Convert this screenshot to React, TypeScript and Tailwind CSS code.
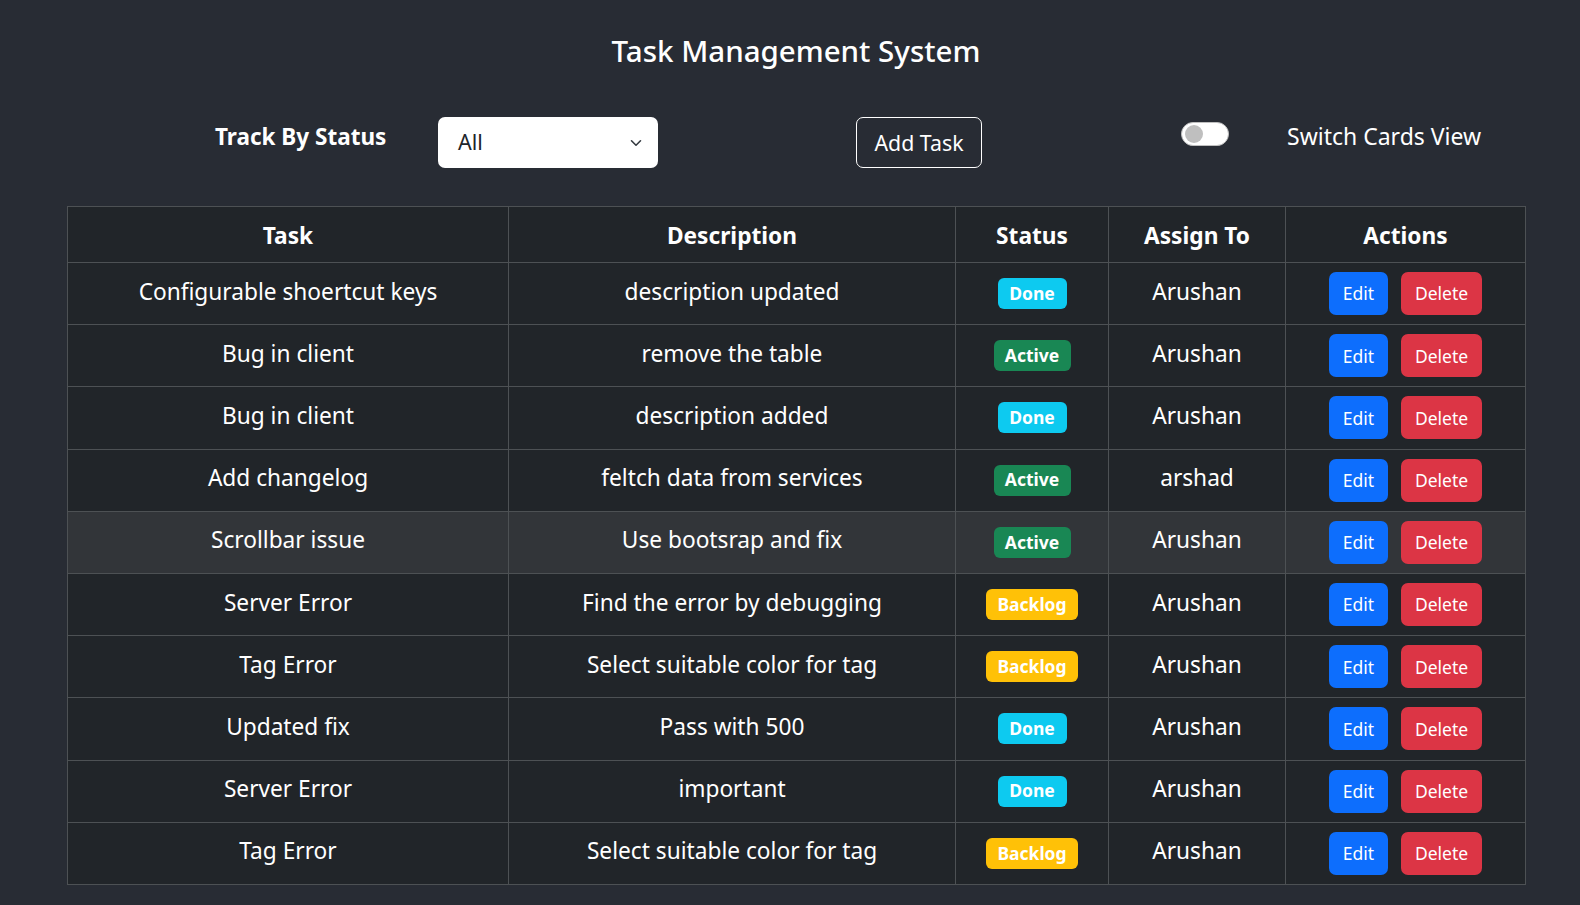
import React from "react";

type Status = "Done" | "Active" | "Backlog";
const rows: { task: string; desc: string; status: Status; who: string }[] = [
  { task: "Configurable shoertcut keys", desc: "description updated", status: "Done", who: "Arushan" },
  { task: "Bug in client", desc: "remove the table", status: "Active", who: "Arushan" },
  { task: "Bug in client", desc: "description added", status: "Done", who: "Arushan" },
  { task: "Add changelog", desc: "feltch data from services", status: "Active", who: "arshad" },
  { task: "Scrollbar issue", desc: "Use bootsrap and fix", status: "Active", who: "Arushan" },
  { task: "Server Error", desc: "Find the error by debugging", status: "Backlog", who: "Arushan" },
  { task: "Tag Error", desc: "Select suitable color for tag", status: "Backlog", who: "Arushan" },
  { task: "Updated fix", desc: "Pass with 500", status: "Done", who: "Arushan" },
  { task: "Server Error", desc: "important", status: "Done", who: "Arushan" },
  { task: "Tag Error", desc: "Select suitable color for tag", status: "Backlog", who: "Arushan" },
];

function Badge({ s }: { s: Status }) {
  const cls =
    s === "Done"
      ? "bg-[#0dcaf0] w-[69px]"
      : s === "Active"
      ? "bg-[#198754] w-[77px]"
      : "bg-[#ffc107] w-[92px]";
  return (
    <span
      className={`inline-flex h-[31px] items-center justify-center rounded-[6px] text-[17.5px] font-bold leading-none text-white ${cls}`}
    >
      {s}
    </span>
  );
}

export default function App() {
  return (
    <div className="min-h-screen bg-[#282c34] text-white font-['Noto_Sans','Open_Sans',sans-serif]">
      <div className="ml-[67px] w-[1458px]">
        <div className="pt-[31px] h-[70px] text-center text-[29.5px] font-medium leading-[40px]">
          Task Management System
        </div>
        <div className="mt-[47px] flex h-[51px] items-start">
          <div className="ml-[148px] mt-[2px] w-[223px] h-[36px] leading-[36px] text-[22.5px] font-bold">
            Track By Status
          </div>
          <div className="relative flex h-[51px] w-[220px] items-center rounded-[7px] bg-white pl-[20px] text-[21.5px] text-[#212529]">
            All
            <svg
              className="absolute right-[16px] top-[22px]"
              width="12"
              height="8"
              viewBox="0 0 12 8"
              fill="none"
              stroke="#343a40"
              strokeWidth="1.6"
              strokeLinecap="round"
              strokeLinejoin="round"
            >
              <path d="M1.5 1.8 6 6.2l4.5-4.4" />
            </svg>
          </div>
          <button className="ml-[198px] flex h-[51px] w-[126px] items-center justify-center rounded-[7px] border border-white text-[21.3px] text-white">
            Add Task
          </button>
          <div className="ml-[199px] mt-[5px] flex h-[24px] w-[48px] items-center rounded-full border border-[#bfbfbf] bg-white pl-[3px]">
            <div className="h-[18px] w-[18px] rounded-full bg-[#bfbfbf]" />
          </div>
          <div className="ml-[58px] mt-[1px] h-[36px] leading-[36px] text-[23px]">Switch Cards View</div>
        </div>
        <table className="mt-[38px] w-[1458px] table-fixed border-collapse bg-[#212529] text-[22.7px] text-white">
          <colgroup>
            <col className="w-[441px]" />
            <col className="w-[447px]" />
            <col className="w-[153px]" />
            <col className="w-[177px]" />
            <col className="w-[240px]" />
          </colgroup>
          <thead>
            <tr className="h-[56px]">
              {["Task", "Description", "Status", "Assign To", "Actions"].map((h) => (
                <th key={h} className="border border-[#4d5154] p-0 pt-[3px] text-center align-middle font-bold">
                  {h}
                </th>
              ))}
            </tr>
          </thead>
          <tbody>
            {rows.map((r, i) => {
              const bg = i === 4 ? "bg-[#323539]" : "";
              return (
                <tr key={i} className={`h-[62.2px] ${bg}`}>
                  <td className="border border-[#4d5154] p-0 pb-[4px] text-center align-middle">{r.task}</td>
                  <td className="border border-[#4d5154] p-0 pb-[4px] text-center align-middle">{r.desc}</td>
                  <td className="border border-[#4d5154] p-0 text-center align-middle">
                    <div className="flex items-center justify-center">
                      <Badge s={r.status} />
                    </div>
                  </td>
                  <td className="border border-[#4d5154] p-0 pb-[4px] text-center align-middle">{r.who}</td>
                  <td className="border border-[#4d5154] p-0 align-middle">
                    <div className="flex items-center justify-center gap-[13px]">
                      <button className="flex h-[43px] w-[59px] items-center justify-center rounded-[7px] bg-[#0d6efd] text-[17.5px] text-white">
                        Edit
                      </button>
                      <button className="flex h-[43px] w-[81px] items-center justify-center rounded-[7px] bg-[#dc3545] text-[17.5px] text-white">
                        Delete
                      </button>
                    </div>
                  </td>
                </tr>
              );
            })}
          </tbody>
        </table>
      </div>
    </div>
  );
}
